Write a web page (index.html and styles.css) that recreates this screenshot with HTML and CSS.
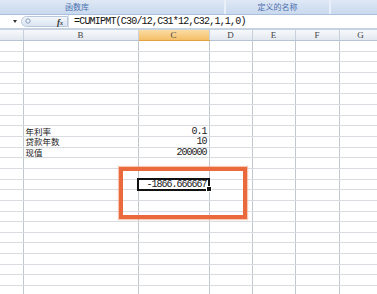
FILE: index.html
```html
<!DOCTYPE html>
<html>

<head>
    <title>CUMIPMT</title>
    <meta charset="utf-8">
    <link rel="stylesheet" href="styles.css">
</head>

<body>
    <div class="ribbon">
        <div class="group group-fn"><span>函数库</span></div>
        <div class="group group-name"><span>定义的名称</span></div>
        <div class="group group-rest"></div>
    </div>

    <div class="formula-bar">
        <div class="name-box"><span class="arrow"></span></div>
        <div class="fx-box">
            <svg class="lens" width="7" height="7" viewBox="0 0 7 7">
                <circle cx="3" cy="3" r="2.2" fill="none" stroke="#8aa0bf" stroke-width="1"/>
            </svg>
            <span class="fx">f<small>x</small></span>
        </div>
        <div class="formula">=CUMIPMT(C30/12,C31*12,C32,1,1,0)</div>
    </div>

    <div class="sheet-wrap">
        <table class="sheet">
            <colgroup>
                <col class="c-row"><col class="c-b"><col class="c-c"><col class="c-d"><col class="c-e"><col class="c-f"><col class="c-g">
            </colgroup>
            <tr class="head"><th></th><th>B</th><th class="active">C</th><th>D</th><th>E</th><th>F</th><th>G</th></tr>
            <tr><td></td><td></td><td></td><td></td><td></td><td></td><td></td></tr>
            <tr><td></td><td></td><td></td><td></td><td></td><td></td><td></td></tr>
            <tr><td></td><td></td><td></td><td></td><td></td><td></td><td></td></tr>
            <tr><td></td><td></td><td></td><td></td><td></td><td></td><td></td></tr>
            <tr><td></td><td></td><td></td><td></td><td></td><td></td><td></td></tr>
            <tr><td></td><td></td><td></td><td></td><td></td><td></td><td></td></tr>
            <tr><td></td><td></td><td></td><td></td><td></td><td></td><td></td></tr>
            <tr><td></td><td></td><td></td><td></td><td></td><td></td><td></td></tr>
            <tr><td></td><td class="txt">年利率</td><td class="num">0.1</td><td></td><td></td><td></td><td></td></tr>
            <tr><td></td><td class="txt">贷款年数</td><td class="num">10</td><td></td><td></td><td></td><td></td></tr>
            <tr><td></td><td class="txt">现值</td><td class="num">200000</td><td></td><td></td><td></td><td></td></tr>
            <tr><td></td><td></td><td></td><td></td><td></td><td></td><td></td></tr>
            <tr><td></td><td></td><td></td><td></td><td></td><td></td><td></td></tr>
            <tr><td></td><td></td><td class="num selected">-1866.666667<span class="handle"></span></td><td></td><td></td><td></td><td></td></tr>
            <tr><td></td><td></td><td></td><td></td><td></td><td></td><td></td></tr>
            <tr><td></td><td></td><td></td><td></td><td></td><td></td><td></td></tr>
            <tr><td></td><td></td><td></td><td></td><td></td><td></td><td></td></tr>
            <tr><td></td><td></td><td></td><td></td><td></td><td></td><td></td></tr>
            <tr><td></td><td></td><td></td><td></td><td></td><td></td><td></td></tr>
            <tr><td></td><td></td><td></td><td></td><td></td><td></td><td></td></tr>
            <tr><td></td><td></td><td></td><td></td><td></td><td></td><td></td></tr>
            <tr><td></td><td></td><td></td><td></td><td></td><td></td><td></td></tr>
            <tr><td></td><td></td><td></td><td></td><td></td><td></td><td></td></tr>
            <tr><td></td><td></td><td></td><td></td><td></td><td></td><td></td></tr>
        </table>
        <div class="highlight"></div>
    </div>
</body>

</html>
```

FILE: styles.css
```css
html,
body {
    margin: 0;
    padding: 0;
    width: 377px;
    height: 294px;
    overflow: hidden;
    background: #fff;
    font-family: "Liberation Mono", "Noto Sans CJK SC", monospace;
}

/* ribbon group labels */

.ribbon {
    display: flex;
    height: 14px;
    background: linear-gradient(#dfe8f5, #c9d9ee);
    border-bottom: 1px solid #a9bfdc;
    font-family: "Noto Sans CJK SC", sans-serif;
    font-size: 8px;
    line-height: 14px;
    color: #4b6fae;
}

.group {
    border-right: 2px solid #e9f0f9;
}

.group-fn {
    width: 226px;
    padding-left: 65px;
    box-sizing: border-box;
}

.group-name {
    width: 103px;
    text-align: center;
}

.group-rest {
    flex-grow: 1;
    border-right: 0;
}

/* formula bar */

.formula-bar {
    display: flex;
    align-items: center;
    height: 13px;
    border-bottom: 2px solid #c6d2e2;
    background: #fff;
}

.name-box {
    width: 21px;
    height: 13px;
    display: flex;
    align-items: center;
    justify-content: flex-end;
    padding-right: 4px;
    box-sizing: border-box;
}

.arrow {
    border-left: 2px solid transparent;
    border-right: 2px solid transparent;
    border-top: 3px solid #333;
}

.fx-box {
    display: flex;
    align-items: center;
    justify-content: space-between;
    width: 47px;
    height: 11px;
    box-sizing: border-box;
    padding: 0 4px 0 3px;
    border: 1px solid #b7c8de;
    border-radius: 6px 0 0 6px;
    background: linear-gradient(#f4f7fb, #dbe5f2);
}

.fx {
    font-family: "Liberation Serif", serif;
    font-style: italic;
    font-weight: bold;
    font-size: 9px;
    color: #333;
}

.fx small {
    font-size: 6px;
}

.formula {
    padding-left: 5px;
    font-size: 10px;
    letter-spacing: -0.8px;
    color: #111;
    border-left: 1px solid #d6dde8;
    line-height: 13px;
}

/* sheet */

.sheet-wrap {
    position: relative;
}

.sheet {
    border-collapse: collapse;
    table-layout: fixed;
    width: 382px;
}

.c-row { width: 23px; }
.c-b { width: 115px; }
.c-c { width: 71px; }
.c-d { width: 43px; }
.c-e { width: 43px; }
.c-f { width: 44px; }
.c-g { width: 43px; }

.sheet td,
.sheet th {
    padding: 0;
    height: 9.67px;
    border-right: 1px solid #c3c8ce;
    border-bottom: 1px solid #d9dde2;
    font-weight: normal;
    font-size: 9px;
    line-height: 9px;
    white-space: nowrap;
    overflow: visible;
}

.sheet tr.head th {
    height: 10px;
    background: linear-gradient(#f7f9fb, #e2e8ef);
    border-right: 1px solid #c7d0db;
    border-bottom: 1px solid #b7c4d4;
    font-family: "Liberation Serif", serif;
    color: #444;
    text-align: center;
}

.sheet tr.head th.active {
    background: linear-gradient(#fbdca3, #f4bf68);
    border-bottom-color: #e2a443;
}

.sheet td.txt {
    padding-left: 2px;
    font-family: "Noto Sans CJK SC", sans-serif;
    font-size: 8.5px;
    color: #222;
}

.sheet td.num {
    text-align: right;
    padding-right: 2px;
    font-size: 10px;
    letter-spacing: -1px;
    color: #222;
}

.sheet td.selected {
    position: relative;
    outline: 2px solid #111;
    outline-offset: -1px;
}

.handle {
    position: absolute;
    right: -3px;
    bottom: -3px;
    width: 4px;
    height: 4px;
    background: #111;
    border: 1px solid #fff;
}

/* callout box */

.highlight {
    position: absolute;
    left: 119px;
    top: 137px;
    width: 128px;
    height: 52px;
    box-sizing: border-box;
    border: 4px solid #ea6a3d;
    box-shadow: 0 0 1px 1px rgba(240, 150, 110, 0.5);
}
```
